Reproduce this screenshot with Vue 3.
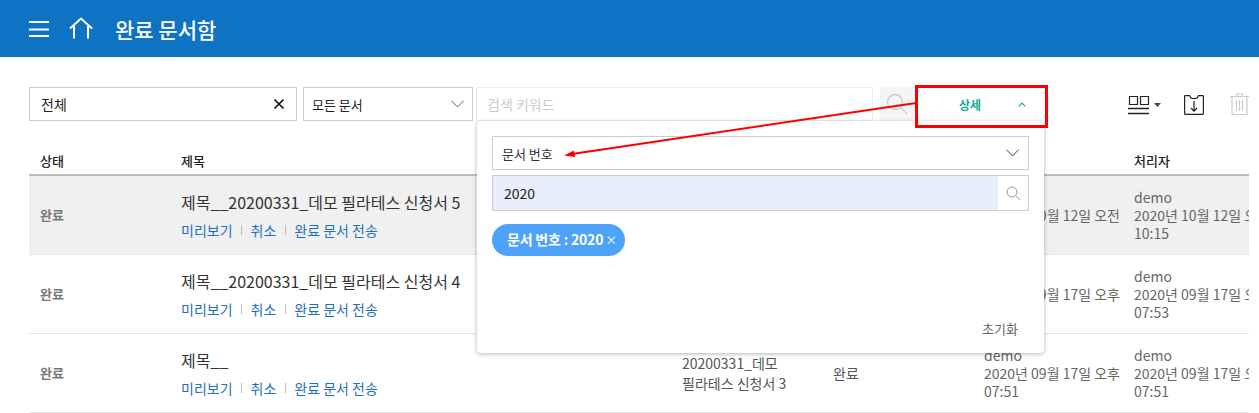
<script setup>
const ACTIONS = ['미리보기', '취소', '완료 문서 전송']

const rows = [
  {
    id: 5, title: '제목__20200331_데모 필라테스 신청서 5', doc: '20200331_데모 필라테스 신청서 5',
    sent: '2020년 10월 12일 오전 10:15', done: '2020년 10월 12일 오전 10:15', active: true,
  },
  {
    id: 4, title: '제목__20200331_데모 필라테스 신청서 4', doc: '20200331_데모 필라테스 신청서 4',
    sent: '2020년 09월 17일 오후 07:53', done: '2020년 09월 17일 오후 07:53',
  },
  {
    id: 3, title: '제목__', doc: '20200331_데모 필라테스 신청서 3',
    sent: '2020년 09월 17일 오후 07:51', done: '2020년 09월 17일 오후 07:51',
  },
]
</script>

<template>
  <div class="page">
    <header class="topbar">
      <svg class="menu-icon" width="20" height="16" viewBox="0 0 20 16" fill="none" stroke="#fff" stroke-width="2">
        <path d="M0 1h20M0 8.500h20M0 15h20" />
      </svg>
      <svg class="home-icon" width="24" height="22" viewBox="0 0 24 22" fill="none" stroke="#fff" stroke-width="2">
        <path d="M1 11.500 12 1.500l11 10M5 9v12.500M19 9v12.500" />
      </svg>
      <h1 class="page-title">완료 문서함</h1>
    </header>

    <div class="toolbar">
      <div class="box status-box">
        <span>전체</span>
        <svg width="12" height="12" viewBox="0 0 12 12" fill="none" stroke="#111" stroke-width="1.700">
          <path d="M1.500 1.500l9 9M10.500 1.500l-9 9" />
        </svg>
      </div>
      <div class="box type-box">
        <span>모든 문서</span>
        <svg width="13" height="8" viewBox="0 0 13 8" fill="none" stroke="#666" stroke-width="1">
          <path d="M.5.800 6.500 7 12.500.800" />
        </svg>
      </div>
      <div class="box keyword-box">검색 키워드</div>
      <div class="search-btn">
        <svg width="22" height="22" viewBox="0 0 22 22" fill="none" stroke="#ccc" stroke-width="1.300">
          <circle cx="9" cy="9" r="7.500" />
          <path d="M14.500 14.500 21 21" />
        </svg>
      </div>
      <div class="detail-btn">
        <span>상세</span>
        <svg width="8" height="5" viewBox="0 0 8 5" fill="none" stroke="#1aa99a" stroke-width="1.200">
          <path d="M.7 4.300 4 1l3.300 3.300" />
        </svg>
      </div>

      <div class="tool-icons">
        <svg class="columns-icon" width="34" height="20" viewBox="0 0 34 20" fill="none">
          <path d="M1.500 1.500h8v8h-8zM12.500 1.500h8v8h-8z" stroke="#222" stroke-width="1.200" />
          <path d="M0 13.500h21M0 18.500h21" stroke="#222" stroke-width="1.300" />
          <path d="M26 8h7l-3.500 4z" fill="#444" />
        </svg>
        <svg class="download-icon" width="20" height="20" viewBox="0 0 20 20" fill="none" stroke="#222" stroke-width="1.200">
          <path d="M6 .7H1.100a.5.500 0 0 0-.5.500v17.600a.5.500 0 0 0 .5.500h17.800a.5.500 0 0 0 .5-.500V1.200a.5.500 0 0 0-.5-.500H14M6 .7c0 2 1.500 3 4 3s4-1 4-3" />
          <path d="M10 6v10M7 13l3 3.200 3-3.200" />
        </svg>
        <svg class="trash-icon" width="19" height="22" viewBox="0 0 19 22" fill="none" stroke="#ccc" stroke-width="1.200">
          <path d="M0 3.500h19M6.500 3.500v-2.500h6v2.500M2 3.500v18h15v-18" />
          <path d="M6.500 7v11M9.500 7v11M12.500 7v11" />
        </svg>
      </div>
    </div>

    <div class="grid">
      <div class="row head">
        <div>상태</div>
        <div>제목</div>
        <div>문서명</div>
        <div>상태</div>
        <div>요청자</div>
        <div>처리자</div>
      </div>
      <div v-for="row in rows" :key="row.id" class="row body" :class="{ active: row.active }">
        <div class="status">완료</div>
        <div class="title-cell">
          <p class="doc-title">{{ row.title }}</p>
          <p class="links">
            <template v-for="(action, i) in ACTIONS" :key="action">
              <i v-if="i > 0" class="sep"></i>
              <a>{{ action }}</a>
            </template>
          </p>
        </div>
        <div class="doc-name">{{ row.doc }}</div>
        <div class="plain">완료</div>
        <div class="person">demo<br>{{ row.sent }}</div>
        <div class="person">demo<br>{{ row.done }}</div>
      </div>
    </div>

    <!-- 상세 검색 팝업 -->
    <div class="popup">
      <div class="box field-select">
        <span>문서 번호</span>
        <svg width="13" height="8" viewBox="0 0 13 8" fill="none" stroke="#444" stroke-width="1">
          <path d="M.5.700 6.500 7l6-6.300" />
        </svg>
      </div>
      <div class="field-input">
        <span class="field-value">2020</span>
        <span class="field-search">
          <svg width="15" height="15" viewBox="0 0 15 15" fill="none" stroke="#999" stroke-width="1">
            <circle cx="6" cy="6" r="5" />
            <path d="M9.700 9.700 14 14" />
          </svg>
        </span>
      </div>
      <div class="chip"><span>문서 번호 : 2020</span><span class="chip-x">×</span></div>
      <div class="reset">초기화</div>
    </div>

    <!-- 빨간 강조 표시 -->
    <div class="mark-box"></div>
    <svg class="mark-arrow" width="1259" height="413" viewBox="0 0 1259 413" fill="none">
      <path d="M916 103 572 154" stroke="#f00" stroke-width="2" />
      <path d="M564 155.500 574 150.500 575 157z" fill="#f00" />
    </svg>
  </div>
</template>

<style>
html, body { margin: 0; background: #fff; overflow: hidden; }
</style>

<style scoped>
.page {
  position: relative;
  width: 1259px;
  height: 413px;
  overflow: hidden;
  font-family: "Noto Sans CJK KR", "Noto Sans", sans-serif;
  color: #222;
}

.topbar {
  display: flex;
  align-items: center;
  height: 57px;
  padding-left: 29px;
  background: #0f73c4;
  box-sizing: border-box;
}
.home-icon { margin-left: 20px; margin-top: -2px; }
.page-title {
  margin: 0 0 0 22px;
  font-size: 21px;
  font-weight: 500;
  color: #fff;
}

.toolbar {
  display: flex;
  align-items: flex-start;
  height: 34px;
  margin-top: 30px;
  padding-left: 29px;
}
.box {
  display: flex;
  align-items: center;
  justify-content: space-between;
  box-sizing: border-box;
  height: 34px;
  border: 1px solid #ccc;
  background: #fff;
  font-size: 13px;
}
.status-box { width: 268px; padding: 0 11px; font-size: 14px; }
.type-box { width: 170px; margin-left: 6px; padding: 0 8px; }
.keyword-box {
  width: 397px;
  margin-left: 3px;
  padding: 0 10px;
  border-color: #eee;
  color: #ccc;
  font-size: 14px;
}
.search-btn {
  display: flex;
  align-items: center;
  justify-content: center;
  box-sizing: border-box;
  width: 33px;
  height: 34px;
  margin-left: 7px;
  background: #f5f5f5;
}
.detail-btn {
  display: flex;
  align-items: center;
  box-sizing: border-box;
  width: 129px;
  height: 34px;
  margin-left: 3px;
  padding-left: 43px;
  font-size: 12px;
  font-weight: 700;
  color: #1aa99a;
}
.detail-btn svg { margin-left: 37px; }

.tool-icons {
  display: flex;
  align-items: flex-start;
  margin-left: 83px;
}
.columns-icon { margin-top: 8px; }
.download-icon { margin: 8px 0 0 22px; }
.trash-icon { margin: 6px 0 0 26px; }

.grid { margin: 28px 0 0 29px; width: 1220px; overflow: hidden; }
.row {
  display: grid;
  grid-template-columns: 141px 501px 151px 151px 150px 150px;
}
.row > div { padding-left: 11px; min-width: 0; }
.head {
  height: 25px;
  border-bottom: 2px solid #bbb;
  font-size: 13px;
  font-weight: 500;
  line-height: 24px;
  color: #222;
}
.body {
  height: 78px;
  align-items: center;
  border-bottom: 1px solid #e6e6e6;
  font-size: 14px;
  color: #666;
}
.body.active { background: #f0f0f0; }
.status { padding-bottom: 2px; font-size: 13px; font-weight: 700; color: #777; }
.doc-title { margin: 0; font-size: 16px; line-height: 22px; color: #333; white-space: nowrap; }
.links {
  display: flex;
  align-items: center;
  margin: 8px 0 0;
  font-size: 14px;
  line-height: 18px;
  color: #1f6fc0;
}
.sep { width: 1px; height: 10px; margin: 0 8.500px; background: #bbb; }
.doc-name { font-size: 14px; line-height: 20px; color: #555; width: 130px; word-break: keep-all; }
.plain { font-size: 14px; color: #555; }
.person { font-size: 14px; line-height: 18px; }

.popup {
  position: absolute;
  left: 477px;
  top: 121px;
  box-sizing: border-box;
  width: 567px;
  height: 232px;
  padding: 15px 15px 0;
  background: #fff;
  border-radius: 4px;
  box-shadow: 0 1px 4px rgba(0, 0, 0, 0.3);
}
.field-select { width: 537px; padding: 0 9px 0 9px; color: #333; }
.field-input {
  display: flex;
  box-sizing: border-box;
  width: 537px;
  height: 36px;
  margin-top: 5px;
  border: 1px solid #ccc;
  background: #e8eefa;
}
.field-value { flex: 1; padding-left: 11px; font-size: 14px; line-height: 34px; color: #222; }
.field-search {
  display: flex;
  align-items: center;
  justify-content: center;
  width: 30px;
  background: #fff;
}
.chip {
  display: inline-flex;
  gap: 2px;
  height: 32px;
  margin-top: 13px;
  padding: 0 8px 0 15px;
  border-radius: 16px;
  background: #4da3f7;
  font-size: 14px;
  font-weight: 700;
  letter-spacing: -0.2px;
  line-height: 31px;
  color: #fff;
}
.chip-x { font-size: 12px; font-weight: 400; }
.reset {
  position: absolute;
  right: 26px;
  bottom: 15px;
  font-size: 13px;
  color: #666;
}

.mark-box {
  position: absolute;
  left: 915px;
  top: 85px;
  box-sizing: border-box;
  width: 133px;
  height: 43px;
  border: 3px solid #f00;
}
.mark-arrow { position: absolute; left: 0; top: 0; pointer-events: none; }
</style>
